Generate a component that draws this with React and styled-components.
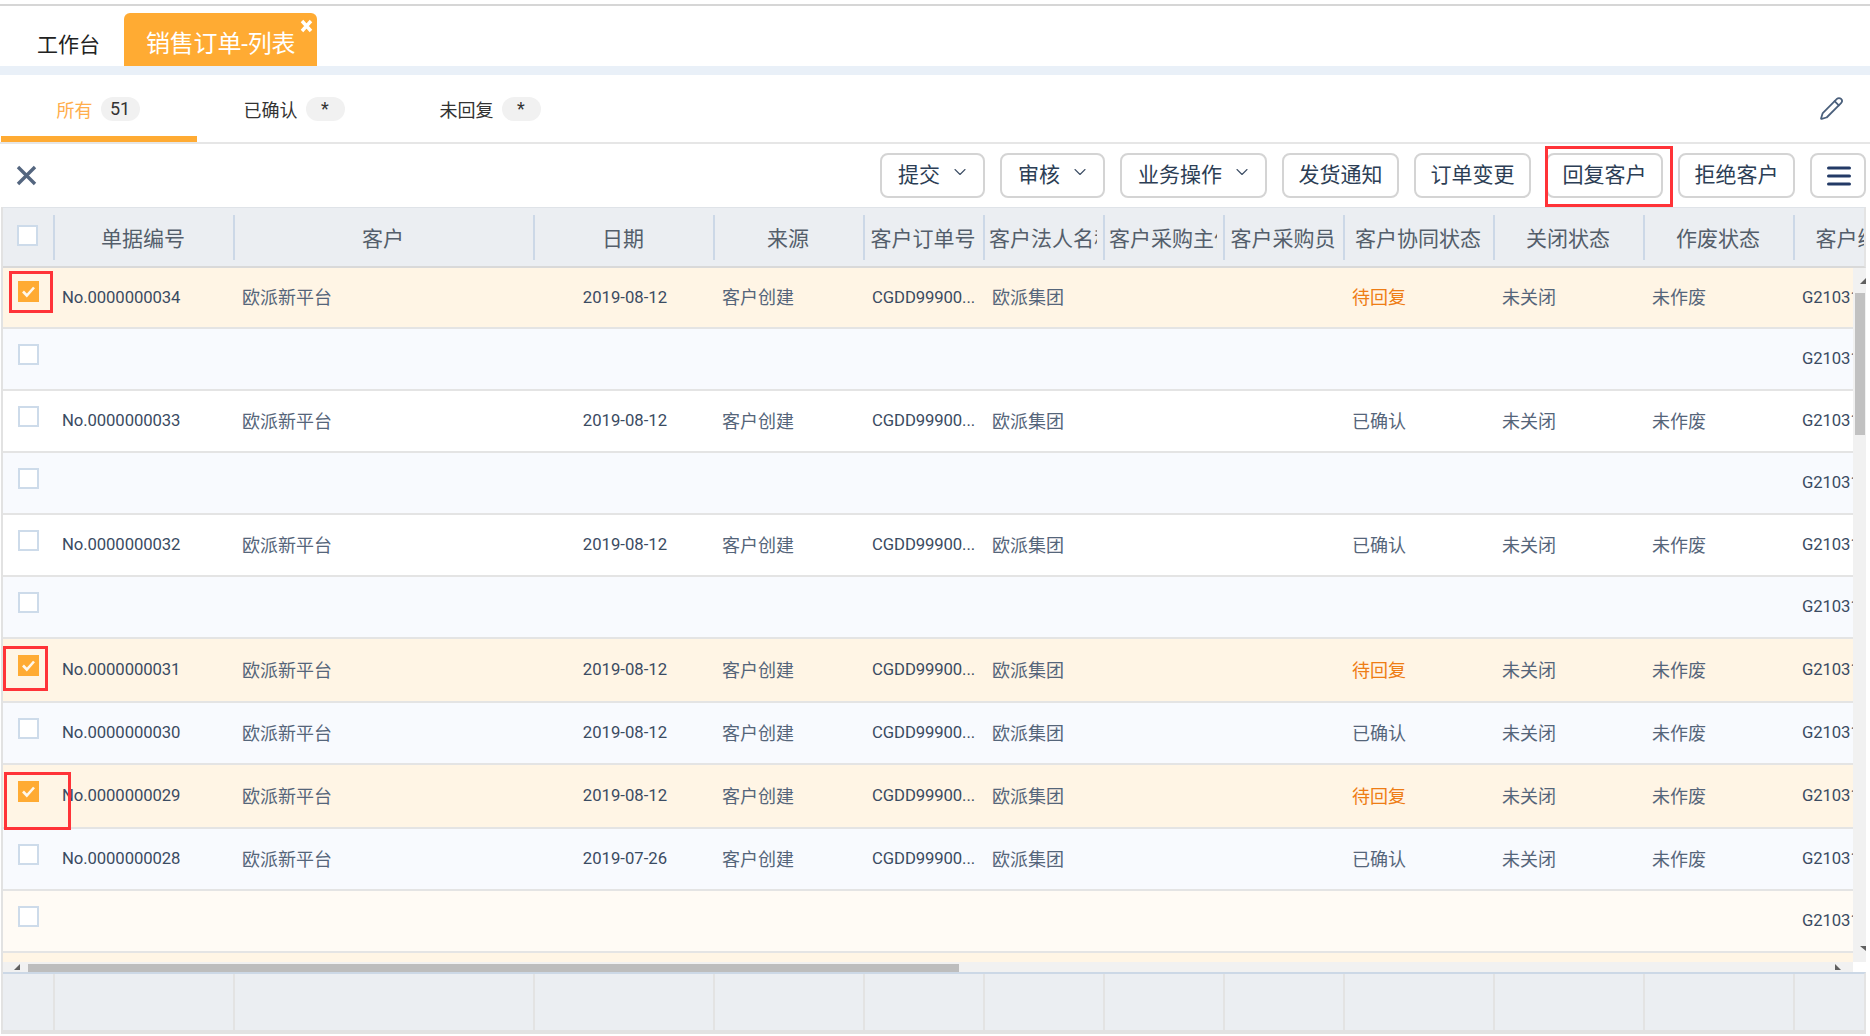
import React from 'react';
import styled, { createGlobalStyle } from 'styled-components';
import { Pencil, ChevronDown } from 'lucide-react';

const Global = createGlobalStyle`
  html, body { margin: 0; padding: 0; background: #fff; }
  body { font-family: Roboto, "Noto Sans CJK SC", sans-serif; }
  * { box-sizing: border-box; }
`;

const COLUMNS = '52px 180px 300px 180px 150px 120px 120px 120px 120px 150px 150px 150px 150px';

const Page = styled.div`
  width: 1870px; height: 1036px; overflow: hidden; padding-top: 4px;
  display: flex; flex-direction: column; background: #fff;
`;
const TabBar = styled.div`
  height: 62px; border-top: 2px solid #d6d6d6; padding-left: 37px;
  display: flex; align-items: flex-end;
`;
const PlainTab = styled.div`
  height: 42px; line-height: 42px; font-size: 21px; color: #222; margin-right: 24px;
`;
const ActiveTab = styled.div`
  position: relative; width: 193px; height: 53px; padding-left: 22px;
  background: #ffab33; border-radius: 6px 6px 0 0; color: #fff; font-size: 24px;
  line-height: 63px; letter-spacing: -0.2px; white-space: nowrap; overflow: hidden;
`;
const CloseMark = styled.svg`
  position: absolute; right: 4px; top: 6px; width: 13px; height: 14px;
`;
const Strip = styled.div`height: 9px; background: #e9f0f8;`;
const SubTabBar = styled.div`
  height: 69px; border-bottom: 2px solid #e6e6e6; padding-left: 1px;
  display: flex; align-items: stretch;
`;
const SubTab = styled.div`
  width: 196px; display: flex; align-items: center; justify-content: center; gap: 8px;
  padding: 6px 2px 0 0; font-size: 18px;
  color: ${p => (p.$active ? '#ffae4d' : '#333')};
  border-bottom: 6px solid ${p => (p.$active ? '#ffab33' : 'transparent')};
`;
const Badge = styled.span`
  width: 39px; height: 24px; border-radius: 12px; background: #f1f1f1; color: #333;
  font-size: 18px; line-height: 24px; text-align: center;
`;
const EditButton = styled.div`
  margin-left: auto; margin-right: 26px; align-self: center; color: #4b607c; display: flex;
`;
const Toolbar = styled.div`
  height: 63px; padding: 0 4px 0 16px; display: flex; align-items: center;
`;
const ButtonGroup = styled.div`margin-left: auto; display: flex; gap: 15px;`;
const ToolButton = styled.div`
  position: relative; height: 45px; padding: 0 14.5px; border: 2px solid #d4d4d4; border-radius: 8px;
  background: #fff; color: #2c3e55; font-size: 21px; line-height: 41px;
  display: flex; align-items: center; white-space: nowrap;
`;
const DropButton = styled(ToolButton)`
  padding: 0 13px 0 16px; gap: 10px;
  svg { margin-top: -7px; color: #3e4f66; }
`;
const MenuButton = styled(ToolButton)`
  width: 56px; padding: 0 0 0 2px; justify-content: center; color: #233a66;
`;
const Annotation = styled.div`
  position: absolute; left: ${p => p.$x}px; top: ${p => p.$y}px;
  width: ${p => p.$w}px; height: ${p => p.$h}px;
  border: 3px solid #ff3338; pointer-events: none; z-index: 2;
`;
const Table = styled.div`
  margin-left: 1px; width: 1865px; height: 827px; border-left: 2px solid #e2e2e2;
  display: flex; flex-direction: column;
`;
const HeaderRow = styled.div`
  height: 61px; flex: none; background: #ebeef2; overflow: hidden;
  border-top: 1px solid #dfe3e8; border-bottom: 2px solid #d9d9d9; border-right: 2px solid #e4e4e4;
  display: grid; grid-template-columns: ${COLUMNS}; align-items: center;
`;
const HeaderCell = styled.div`
  height: 45px; padding: 0 6px 0 4px; border-right: 2px solid #ccd8e7;
`;
const HeaderLabel = styled.div`
  padding-top: 2px; line-height: 45px; overflow: hidden; white-space: nowrap; text-align: center;
  font-size: 21px; color: #545e6b;
`;
const HeaderCheckCell = styled(HeaderCell)`
  padding: 10px 0 0 14px;
`;
const Middle = styled.div`display: flex; flex: none; height: 704px;`;
const LeftPane = styled.div`width: 1850px; display: flex; flex-direction: column;`;
const Viewport = styled.div`height: 694px; overflow: hidden;`;
const TONES = { picked: '#fff5e5', blue: '#f8fafe', white: '#fff', cream: '#fffbf5' };
const Row = styled.div`
  position: relative; height: ${p => p.$h}px; background: ${p => TONES[p.$tone]};
  border-bottom: ${p => (p.$open ? 0 : 2)}px solid #e4e4e4; overflow: visible;
  display: grid; grid-template-columns: ${COLUMNS}; align-items: center;
`;
const CheckCell = styled.div`
  align-self: start; padding: ${p => p.$top}px 0 0 15px;
`;
const CheckBox = styled.div`
  width: 21px; height: 21px; display: flex; align-items: center; justify-content: center;
  background: ${p => (p.$on ? '#ffab33' : '#fff')};
  border: ${p => (p.$on ? 0 : '2px solid #cddbea')};
`;
const Cell = styled.div`
  padding: 0 0 3px 7px; white-space: nowrap; overflow: hidden; font-size: 18px; color: #55657a;
`;
const CodeCell = styled(Cell)`
  font-size: 16.7px; color: #3a4b62; letter-spacing: -0.1px; padding-bottom: 1px;
`;
const DateCell = styled(CodeCell)`
  padding-left: 0; text-align: center; letter-spacing: 0;
`;
const StatusCell = styled(Cell)`
  color: ${p => (p.$pending ? '#ee7d15' : '#55657a')};
`;
const HScroll = styled.div`
  height: 10px; background: #f1f1f1; display: flex; align-items: flex-end;
`;
const HThumb = styled.div`height: 8px; width: 931px; margin-left: 8px; background: #bdbdbd;`;
const ArrowSvg = styled.svg`display: block; flex: none; color: #606060;`;
const HArrowLeft = styled(ArrowSvg)`margin: 0 0 2px 11px;`;
const HArrowRight = styled(ArrowSvg)`margin: 0 12px 2px auto;`;
const VScroll = styled.div`
  width: 13px; height: 694px; background: #f1f1f1; padding-left: 2px;
  display: flex; flex-direction: column;
`;
const VArrowUp = styled(ArrowSvg)`margin: 10px 0 0 5px;`;
const VThumb = styled.div`width: 10px; height: 142px; margin-top: 9px; background: #c1c1c1;`;
const VArrowDown = styled(ArrowSvg)`margin: auto 0 11px 5px;`;
const FooterRow = styled.div`
  height: 58px; flex: none; background: #ebeef2; overflow: hidden;
  border-top: 2px solid #ccd8e6; border-right: 2px solid #e4e4e4;
  display: grid; grid-template-columns: ${COLUMNS};
`;
const FooterCell = styled.div`border-right: 2px solid #e3e3e3;`;
const BottomEdge = styled.div`height: 4px; flex: none; background: #e2e2e2;`;

const headers = ['单据编号', '客户', '日期', '来源', '客户订单号', '客户法人名称', '客户采购主体', '客户采购员', '客户协同状态', '关闭状态', '作废状态', '客户编码名'];

const full = (no, status, date = '2019-08-12') => ({ no, status, date });
const rows = [
  { h: 61, tone: 'picked', top: 13, on: true, mark: { x: 6, y: 3, w: 44, h: 42 }, ...full('No.0000000034', '待回复') },
  { h: 62, tone: 'blue', top: 15 },
  { h: 62, tone: 'white', top: 15, ...full('No.0000000033', '已确认') },
  { h: 62, tone: 'blue', top: 15 },
  { h: 62, tone: 'white', top: 15, ...full('No.0000000032', '已确认') },
  { h: 62, tone: 'blue', top: 15 },
  { h: 64, tone: 'picked', top: 16, on: true, mark: { x: 0, y: 7, w: 45, h: 45 }, ...full('No.0000000031', '待回复') },
  { h: 62, tone: 'blue', top: 15, ...full('No.0000000030', '已确认') },
  { h: 64, tone: 'picked', top: 16, on: true, mark: { x: 1, y: 7, w: 67, h: 58 }, ...full('No.0000000029', '待回复') },
  { h: 62, tone: 'blue', top: 15, ...full('No.0000000028', '已确认', '2019-07-26') },
  { h: 62, tone: 'cream', top: 15 },
  { h: 9, tone: 'picked', top: 15, open: true, blank: true },
];

const CheckMark = () => (
  <svg width="15" height="13" viewBox="0 0 15 13">
    <path d="M2 6.5 L5.8 10.5 L13 2.5" fill="none" stroke="#fff8ec" strokeWidth="2.6" />
  </svg>
);

const Dropdown = ({ children }) => (
  <DropButton>
    {children}
    <ChevronDown size={20} strokeWidth={1.3} />
  </DropButton>
);

export default function App() {
  return (
    <Page>
      <Global />
      <TabBar>
        <PlainTab>工作台</PlainTab>
        <ActiveTab>
          销售订单-列表
          <CloseMark viewBox="0 0 13 14">
            <path d="M2 2 L11 12 M11 2 L2 12" stroke="#fff" strokeWidth="3.4" />
          </CloseMark>
        </ActiveTab>
      </TabBar>
      <Strip />
      <SubTabBar>
        <SubTab $active>所有<Badge>51</Badge></SubTab>
        <SubTab>已确认<Badge>*</Badge></SubTab>
        <SubTab>未回复<Badge>*</Badge></SubTab>
        <EditButton><Pencil size={25} strokeWidth={1.7} /></EditButton>
      </SubTabBar>
      <Toolbar>
        <svg width="21" height="21" viewBox="0 0 21 21">
          <path d="M2 2 L19 19 M19 2 L2 19" stroke="#54667f" strokeWidth="3.4" />
        </svg>
        <ButtonGroup>
          <Dropdown>提交</Dropdown>
          <Dropdown>审核</Dropdown>
          <Dropdown>业务操作</Dropdown>
          <ToolButton>发货通知</ToolButton>
          <ToolButton>订单变更</ToolButton>
          <ToolButton>
            回复客户
            <Annotation $x={-3} $y={-9} $w={128} $h={61} />
          </ToolButton>
          <ToolButton>拒绝客户</ToolButton>
          <MenuButton>
            <svg width="24" height="20" viewBox="0 0 24 20">
              <path d="M1.5 2 H22.5 M1.5 10 H22.5 M1.5 18 H22.5" stroke="currentColor" strokeWidth="3" strokeLinecap="round" />
            </svg>
          </MenuButton>
        </ButtonGroup>
      </Toolbar>
      <Table>
        <HeaderRow>
          <HeaderCheckCell><CheckBox /></HeaderCheckCell>
          {headers.map(h => <HeaderCell key={h}><HeaderLabel>{h}</HeaderLabel></HeaderCell>)}
        </HeaderRow>
        <Middle>
          <LeftPane>
            <Viewport>
              {rows.map((r, i) => (
                <Row key={i} $h={r.h} $tone={r.tone} $open={r.open}>
                  <CheckCell $top={r.top}>
                    <CheckBox $on={r.on}>{r.on && <CheckMark />}</CheckBox>
                  </CheckCell>
                  <CodeCell>{r.no}</CodeCell>
                  <Cell>{r.no && '欧派新平台'}</Cell>
                  <DateCell>{r.date}</DateCell>
                  <Cell>{r.no && '客户创建'}</Cell>
                  <CodeCell>{r.no && 'CGDD99900...'}</CodeCell>
                  <Cell>{r.no && '欧派集团'}</Cell>
                  <Cell />
                  <Cell />
                  <StatusCell $pending={r.status === '待回复'}>{r.status}</StatusCell>
                  <Cell>{r.no && '未关闭'}</Cell>
                  <Cell>{r.no && '未作废'}</Cell>
                  <CodeCell>{!r.blank && 'G21031'}</CodeCell>
                  {r.mark && <Annotation $x={r.mark.x} $y={r.mark.y} $w={r.mark.w} $h={r.mark.h} />}
                </Row>
              ))}
            </Viewport>
            <HScroll>
              <HArrowLeft width="6" height="6" viewBox="0 0 6 6"><path d="M6 0 V6 H0 Z" fill="currentColor" /></HArrowLeft>
              <HThumb />
              <HArrowRight width="6" height="6" viewBox="0 0 6 6"><path d="M0 0 L6 6 H0 Z" fill="currentColor" /></HArrowRight>
            </HScroll>
          </LeftPane>
          <VScroll>
            <VArrowUp width="6" height="6" viewBox="0 0 6 6"><path d="M6 0 V6 H0 Z" fill="currentColor" /></VArrowUp>
            <VThumb />
            <VArrowDown width="6" height="5" viewBox="0 0 6 5"><path d="M0 0 H6 V5 Z" fill="currentColor" /></VArrowDown>
          </VScroll>
        </Middle>
        <FooterRow>
          {Array.from({ length: 13 }, (_, i) => <FooterCell key={i} />)}
        </FooterRow>
        <BottomEdge />
      </Table>
    </Page>
  );
}
